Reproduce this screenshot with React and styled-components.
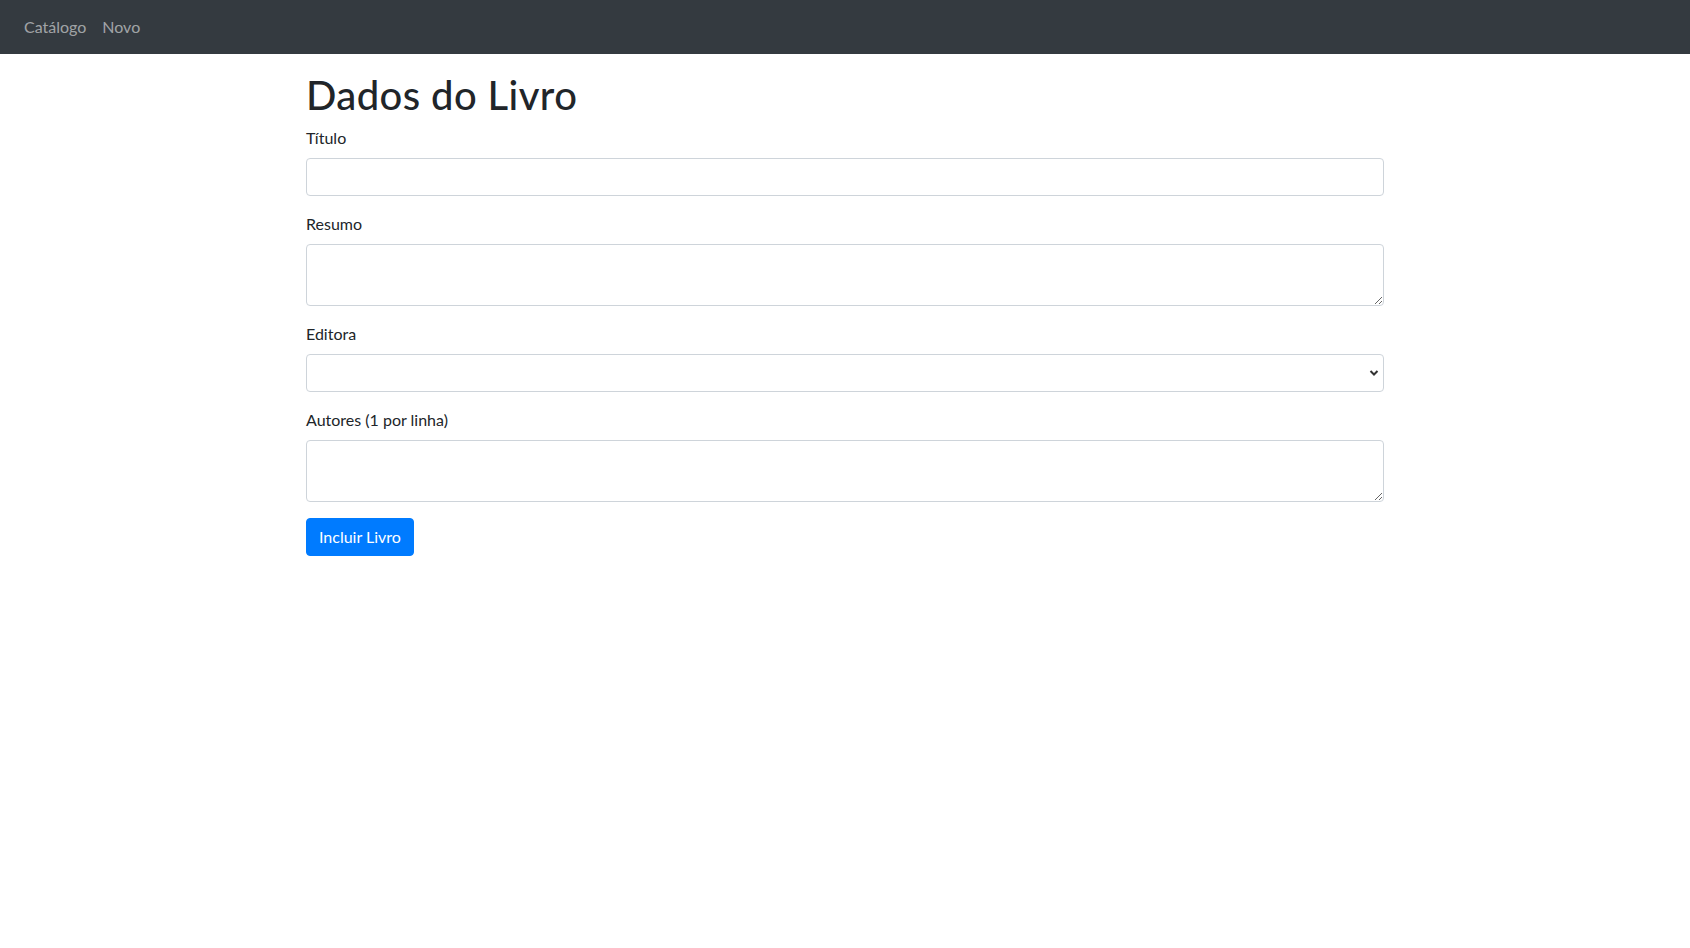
import styled, { createGlobalStyle } from "styled-components";

const GlobalStyle = createGlobalStyle`
    * {
        box-sizing: border-box;
    }

    body {
        margin: 0;
        font-family: 'Lato', 'Liberation Sans', sans-serif;
        font-size: 16px;
        line-height: 1.5;
        color: #212529;
        background-color: #ffffff;
    }
`;

export default function App() {
    return (
        <>
            <GlobalStyle />
            <NavBar>
                <NavLink href="#">Catálogo</NavLink>
                <NavLink href="#">Novo</NavLink>
            </NavBar>
            <Container>
                <Title>Dados do Livro</Title>
                <form onSubmit={e => e.preventDefault()}>
                    <FormGroup>
                        <Label htmlFor="titulo">Título</Label>
                        <Input id="titulo" type="text" />
                    </FormGroup>
                    <FormGroup>
                        <Label htmlFor="resumo">Resumo</Label>
                        <TextArea id="resumo" rows={2} />
                    </FormGroup>
                    <FormGroup>
                        <Label htmlFor="editora">Editora</Label>
                        <SelectWrapper>
                            <Select id="editora" defaultValue="">
                                <option value=""></option>
                            </Select>
                            <Chevron width="10" height="10" viewBox="0 0 10 10">
                                <path d="M1.5 3l3.5 3.5L8.5 3" fill="none" stroke="#333" strokeWidth="2" />
                            </Chevron>
                        </SelectWrapper>
                    </FormGroup>
                    <FormGroup>
                        <Label htmlFor="autores">Autores (1 por linha)</Label>
                        <TextArea id="autores" rows={2} />
                    </FormGroup>
                    <Button type="submit">Incluir Livro</Button>
                </form>
            </Container>
        </>
    );
}

const NavBar = styled.nav`
    height: 54px;
    background-color: #343a40;
    display: flex;
    align-items: center;
    padding: 0 16px;
`;

const NavLink = styled.a`
    color: rgba(255, 255, 255, 0.55);
    text-decoration: none;
    padding: 8px;
    font-size: 16px;
`;

const Container = styled.div`
    width: 1078px;
    margin: 16px auto 0 auto;
`;

const Title = styled.h1`
    font-size: 40px;
    font-weight: 500;
    line-height: 1.2;
    letter-spacing: 0.4px;
    padding-top: 1px;
    margin: 0 0 7px 0;
`;

const FormGroup = styled.div`
    margin-bottom: 16px;
`;

const Label = styled.label`
    display: inline-block;
    margin-bottom: 8px;
`;

const fieldStyle = `
    display: block;
    width: 100%;
    padding: 6px 12px;
    font-family: inherit;
    font-size: 16px;
    line-height: 1.5;
    color: #495057;
    background-color: #ffffff;
    border: 1px solid #ced4da;
    border-radius: 4px;
    outline: none;
`;

const Input = styled.input`
    ${fieldStyle}
    height: 38px;
`;

const TextArea = styled.textarea`
    ${fieldStyle}
    height: 62px;
    resize: vertical;
`;

const SelectWrapper = styled.div`
    position: relative;
`;

const Select = styled.select`
    ${fieldStyle}
    height: 38px;
    appearance: none;
`;

const Chevron = styled.svg`
    position: absolute;
    right: 5px;
    top: 14px;
    pointer-events: none;
`;

const Button = styled.button`
    display: inline-block;
    height: 38px;
    padding: 6px 12px;
    font-family: inherit;
    font-size: 16px;
    line-height: 1.5;
    color: #ffffff;
    background-color: #007bff;
    border: 1px solid #007bff;
    border-radius: 4px;
    cursor: pointer;
`;
